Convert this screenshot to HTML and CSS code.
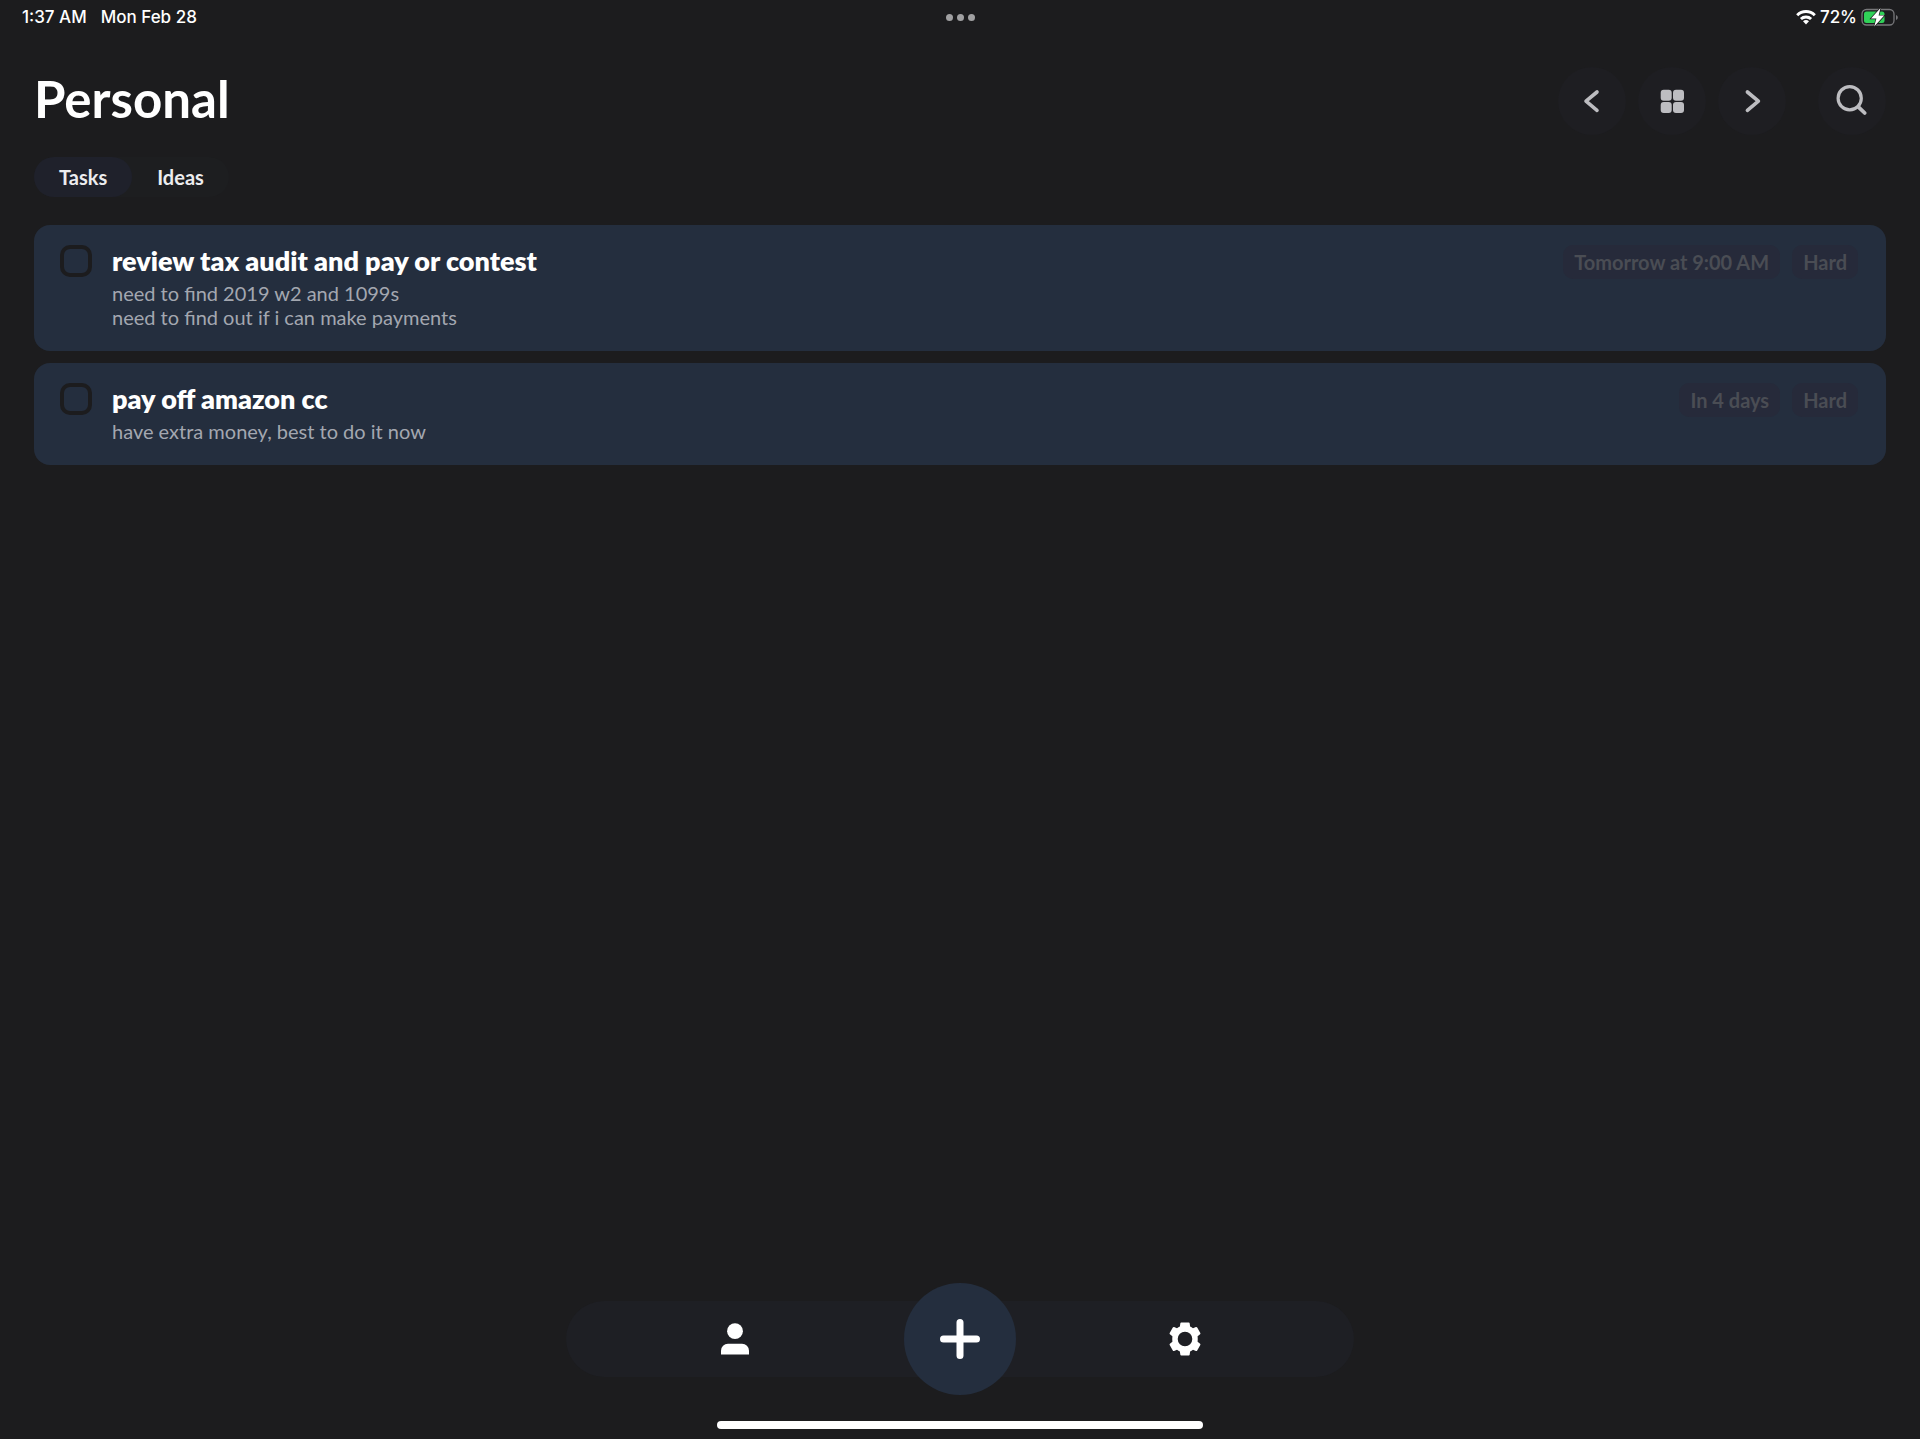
FILE: index.html
```html
<!DOCTYPE html>
<html lang="en">
<head>
    <meta charset="UTF-8">
    <meta name="viewport" content="width=device-width, initial-scale=1.0">
    <title>Personal</title>
    <link rel="stylesheet" href="styles.css">
</head>
<body>
<div class="status-bar">
    <div class="status-left">
        <span>1:37 AM</span>
        <span>Mon Feb 28</span>
    </div>
    <div class="status-dots">
        <i></i><i></i><i></i>
    </div>
    <div class="status-right">
        <svg class="wifi" width="20" height="16" viewBox="0 0 20 16" fill="none" stroke="#fff" stroke-width="3">
            <path d="M1.2 6.2a12.6 12.6 0 0 1 17.6 0"/>
            <path d="M4.9 10a7.4 7.4 0 0 1 10.2 0"/>
            <path d="M10 15.4l-3-3.1a4.4 4.4 0 0 1 6 0z" fill="#fff" stroke="none"/>
        </svg>
        <span>72%</span>
        <svg class="battery" width="37" height="20" viewBox="0 0 37 20">
            <rect x="1" y="2.5" width="32" height="15.5" rx="4.5" fill="none" stroke="#77777a" stroke-width="1.3"/>
            <path d="M35 8v5c1.1-.4 1.8-1.4 1.8-2.5s-.7-2.1-1.8-2.5z" fill="#77777a"/>
            <rect x="3" y="4.5" width="20.5" height="11.5" rx="2.5" fill="#30d158"/>
            <path d="M19.5 1L10 11.6h5.4L13.2 19.4l10-10.800h-5.600z" fill="#fff" stroke="#1c1c1e" stroke-width="1.4" paint-order="stroke"/>
        </svg>
    </div>
</div>

<header class="header">
    <h1>Personal</h1>
    <div class="header-buttons">
        <button class="round-btn" aria-label="Previous">
            <svg width="32" height="32" viewBox="0 0 32 32" fill="none" stroke="#bdbdc1" stroke-width="3.6" stroke-linecap="round" stroke-linejoin="round"><path d="M21 7l-11 9.200 11 9.200"/></svg>
        </button>
        <button class="round-btn" aria-label="Grid">
            <svg width="32" height="32" viewBox="0 0 32 32" fill="#bdbdc1">
                <rect x="4.7" y="4.7" width="11" height="11" rx="3"/>
                <rect x="17" y="4.7" width="11" height="11" rx="3"/>
                <rect x="4.7" y="17" width="11" height="11" rx="3"/>
                <rect x="17" y="17" width="11" height="11" rx="3"/>
            </svg>
        </button>
        <button class="round-btn" aria-label="Next">
            <svg width="32" height="32" viewBox="0 0 32 32" fill="none" stroke="#bdbdc1" stroke-width="3.6" stroke-linecap="round" stroke-linejoin="round"><path d="M11.400 7l11 9.200-11 9.200"/></svg>
        </button>
        <button class="round-btn search-btn" aria-label="Search">
            <svg width="32" height="32" viewBox="0 0 32 32" fill="none" stroke="#bdbdc1" stroke-width="3.2" stroke-linecap="round"><circle cx="13.7" cy="13.2" r="11.6"/><path d="M22.3 21.8l6.4 6.2" stroke-width="3.8"/></svg>
        </button>
    </div>
</header>

<div class="tabs">
    <button class="tab active">Tasks</button>
    <button class="tab">Ideas</button>
</div>

<main class="task-list">
    <div class="task">
        <input type="checkbox" id="task1" class="task-check">
        <div class="task-body">
            <label for="task1">review tax audit and pay or contest</label>
            <p>need to find 2019 w2 and 1099s<br>need to find out if i can make payments</p>
        </div>
        <div class="tags">
            <span class="tag">Tomorrow at 9:00 AM</span>
            <span class="tag">Hard</span>
        </div>
    </div>
    <div class="task">
        <input type="checkbox" id="task2" class="task-check">
        <div class="task-body">
            <label for="task2">pay off amazon cc</label>
            <p>have extra money, best to do it now</p>
        </div>
        <div class="tags">
            <span class="tag">In 4 days</span>
            <span class="tag">Hard</span>
        </div>
    </div>
</main>

<nav class="bottom-nav">
    <button class="nav-btn" aria-label="Profile">
        <svg width="36" height="36" viewBox="0 0 36 36" fill="#fff">
            <circle cx="18" cy="10.200" r="7.900"/>
            <path d="M4 33.500v-3.700a7 7 0 0 1 7-7h14a7 7 0 0 1 7 7v3.700z"/>
        </svg>
    </button>
    <button class="nav-btn add-btn" aria-label="Add task">
        <svg width="40" height="40" viewBox="0 0 40 40" fill="none" stroke="#fff" stroke-width="7" stroke-linecap="round"><path d="M20 3.500v33M3.500 20h33"/></svg>
    </button>
    <button class="nav-btn" aria-label="Settings">
        <svg width="36" height="36" viewBox="0 0 36 36" fill="#fff">
            <path fill-rule="evenodd" d="M14.300 1.500h7.400q.9 0 1 .9l.4 3.100q1.500.6 2.900 1.700l2.900-1.200q.8-.3 1.300.5l3.100 5.500q.4.8-.2 1.300l-2.500 1.900q.3 2.800 0 5.600l2.500 1.900q.6.5.2 1.300l-3.100 5.500q-.5.800-1.300.5l-2.900-1.200q-1.400 1.100-2.900 1.700l-.4 3.100q-.1.900-1 .9h-7.400q-.9 0-1-.9l-.4-3.100q-1.500-.6-2.900-1.700l-2.900 1.200q-.8.300-1.300-.5l-3.100-5.500q-.4-.8.2-1.300l2.500-1.900q-.3-2.800 0-5.600l-2.500-1.900q-.6-.5-.2-1.300l3.100-5.500q.5-.8 1.300-.5l2.900 1.200q1.400-1.100 2.900-1.700l.4-3.100q.1-.9 1-.9zM18 10.700a7.300 7.300 0 1 0 0 14.600a7.300 7.300 0 1 0 0-14.600z"/>
        </svg>
    </button>
</nav>
<div class="home-indicator"></div>
</body>
</html>
```
FILE: styles.css
```css
* {
    box-sizing: border-box;
}

body {
    margin: 0;
    min-height: 100vh;
    display: flex;
    flex-direction: column;
    background-color: #1c1c1e;
    color: #fff;
    font-family: Lato, sans-serif;
}

button {
    border: none;
    padding: 0;
    color: inherit;
    font-family: inherit;
    cursor: pointer;
}

svg {
    display: block;
}

/* Status bar */
.status-bar {
    display: grid;
    grid-template-columns: 1fr auto 1fr;
    align-items: center;
    height: 34px;
    padding: 0 22px;
    font-family: Inter, sans-serif;
    font-size: 17px;
    font-weight: 500;
}

.status-left {
    display: flex;
    gap: 14px;
}

.status-dots {
    display: flex;
    gap: 4px;
}

.status-dots i {
    width: 7px;
    height: 7px;
    border-radius: 50%;
    background-color: #a0a0a2;
}

.status-right {
    display: flex;
    justify-content: flex-end;
    align-items: center;
    gap: 4px;
}

/* Header */
.header {
    display: flex;
    justify-content: space-between;
    align-items: center;
    padding: 33px 34px 0;
}

h1 {
    margin: 0;
    padding-bottom: 4px;
    font-size: 51px;
    line-height: 64px;
    font-weight: 700;
}

.header-buttons {
    display: flex;
    gap: 12px;
}

.round-btn {
    display: flex;
    align-items: center;
    justify-content: center;
    width: 68px;
    height: 68px;
    border-radius: 50%;
    background-color: #1e1e22;
}

.search-btn {
    margin-left: 20px;
}

/* Tabs */
.tabs {
    display: flex;
    align-self: flex-start;
    margin: 22px 34px 0;
    border-radius: 20px;
    background-color: #1d1e20;
}

.tab {
    height: 40px;
    padding: 0 25px;
    border-radius: 20px;
    background: none;
    font-size: 20px;
    font-weight: 700;
    color: #ececee;
}

.tab.active {
    background-color: #1f212b;
}

/* Tasks */
.task-list {
    display: flex;
    flex-direction: column;
    gap: 12px;
    padding: 28px 34px;
}

.task {
    display: flex;
    align-items: flex-start;
    padding: 20px 28px 22px 26px;
    border-radius: 16px;
    background-color: #242e3e;
}

.task-check {
    appearance: none;
    width: 32px;
    height: 32px;
    margin: 0 20px 0 0;
    border: 4px solid #1c1c1e;
    border-radius: 10px;
}

.task-body {
    flex: 1;
}

.task-body label {
    display: block;
    font-size: 27px;
    line-height: 32px;
    font-weight: 800;
}

.task-body p {
    margin: 4px 0 0;
    font-size: 20px;
    line-height: 24px;
    color: #a3a7b0;
}

.tags {
    display: flex;
    gap: 12px;
}

.tag {
    padding: 0 11px;
    border-radius: 10px;
    background-color: #262a3a;
    color: #4a4d54;
    font-size: 20px;
    line-height: 34px;
    font-weight: 700;
}

/* Bottom navigation */
.bottom-nav {
    display: grid;
    grid-template-columns: repeat(3, 1fr);
    align-items: center;
    justify-items: center;
    align-content: center;
    width: 100%;
    max-width: 788px;
    height: 76px;
    margin: auto auto 44px;
    padding: 0 56px;
    border-radius: 38px;
    background-color: #1e1f24;
}

.nav-btn {
    background: none;
}

.add-btn {
    display: flex;
    align-items: center;
    justify-content: center;
    width: 112px;
    height: 112px;
    border-radius: 50%;
    background-color: #242e3e;
}

.home-indicator {
    align-self: center;
    width: 486px;
    max-width: 80%;
    height: 8px;
    margin-bottom: 10px;
    border-radius: 4px;
    background-color: #fff;
}
```
